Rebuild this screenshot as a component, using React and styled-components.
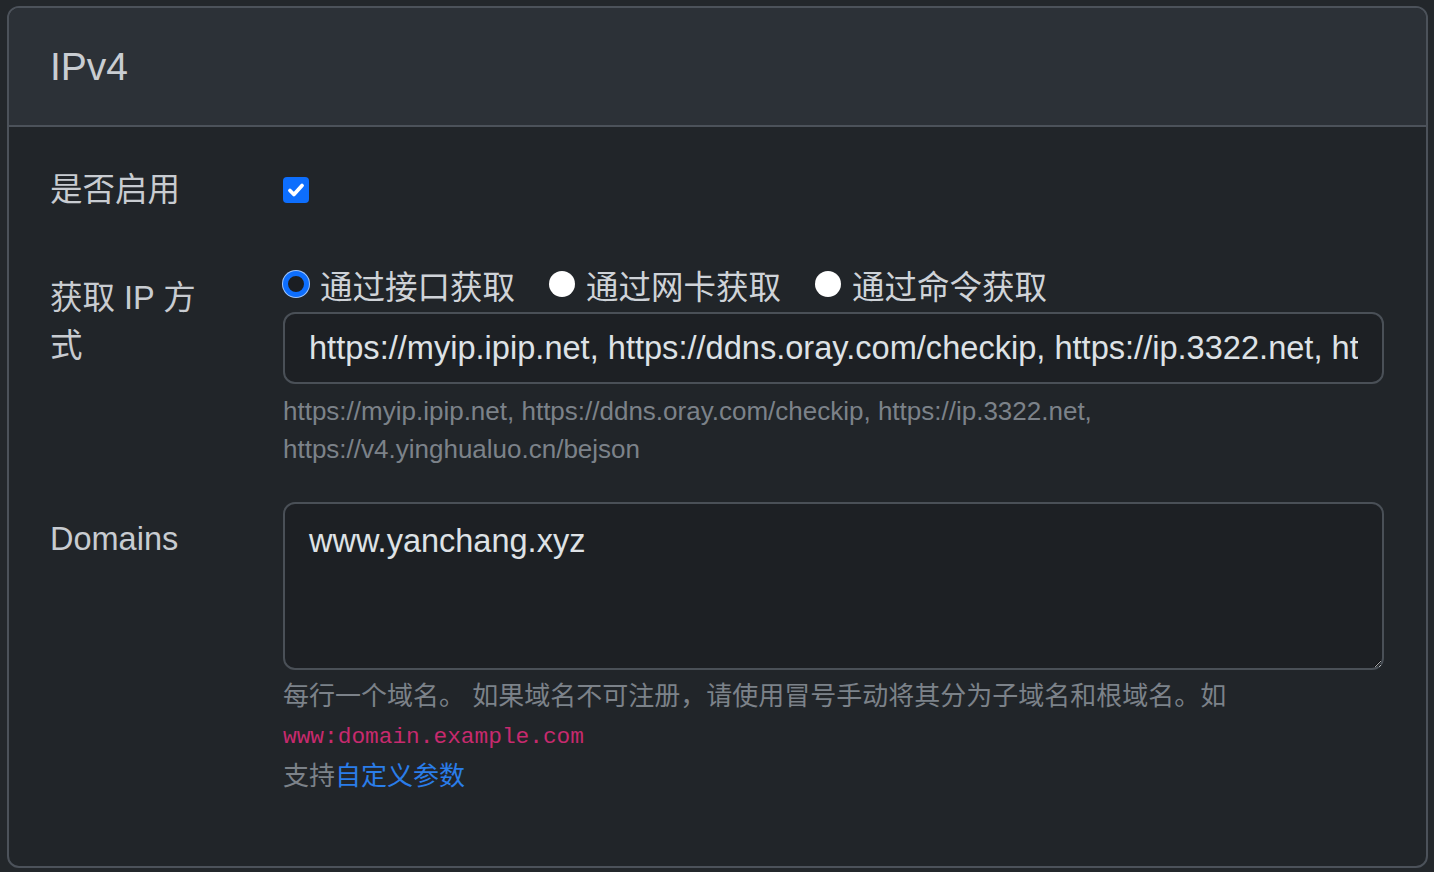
import React from "react";
import styled, { createGlobalStyle } from "styled-components";

const GlobalStyle = createGlobalStyle`
  html, body {
    margin: 0;
    padding: 0;
    background: #23272b;
  }
  body {
    font-family: "Liberation Sans", "Noto Sans CJK SC", sans-serif;
  }
`;

const urls =
  "https://myip.ipip.net, https://ddns.oray.com/checkip, https://ip.3322.net, https://v4.yinghualuo.cn/bejson";

export default function App() {
  return (
    <>
      <GlobalStyle />
      <Page>
        <Card>
          <CardHeader>IPv4</CardHeader>
          <CardBody>
            <Row>
              <Label>是否启用</Label>
              <Control>
                <CheckLine>
                  <Checkbox>
                    <svg width="22" height="22" viewBox="0 0 20 20">
                      <path
                        d="M4.5 10.5l3.6 3.6L15.5 6"
                        fill="none"
                        stroke="#fff"
                        strokeWidth="3.4"
                        strokeLinecap="round"
                        strokeLinejoin="round"
                      />
                    </svg>
                  </Checkbox>
                </CheckLine>
              </Control>
            </Row>
            <Row>
              <Label>获取 IP 方式</Label>
              <Control>
                <RadioGroup>
                  <RadioItem>
                    <Radio $checked />
                    通过接口获取
                  </RadioItem>
                  <RadioItem>
                    <Radio />
                    通过网卡获取
                  </RadioItem>
                  <RadioItem>
                    <Radio />
                    通过命令获取
                  </RadioItem>
                </RadioGroup>
                <Input type="text" defaultValue={urls} readOnly />
                <HelpText $top={8}>{urls}</HelpText>
              </Control>
            </Row>
            <Row>
              <Label>Domains</Label>
              <Control>
                <TextArea defaultValue="www.yanchang.xyz" />
                <HelpText $top={7}>
                  每行一个域名。 如果域名不可注册，请使用冒号手动将其分为子域名和根域名。如
                  <br />
                  <Code>www:domain.example.com</Code>
                  <br />
                  支持<Link href="#">自定义参数</Link>
                </HelpText>
              </Control>
            </Row>
          </CardBody>
        </Card>
      </Page>
    </>
  );
}

const Page = styled.div`
  padding: 6px 6px 4px 7px;
  box-sizing: border-box;
  width: 1434px;
  height: 872px;
`;

const Card = styled.div`
  box-sizing: border-box;
  width: 1421px;
  height: 862px;
  border: 2px solid #4c525a;
  border-radius: 12px;
  background: #212529;
  overflow: hidden;
`;

const CardHeader = styled.div`
  height: 119px;
  box-sizing: border-box;
  display: flex;
  align-items: center;
  padding: 0 41px;
  background: #2c3137;
  border-bottom: 2px solid #4c525a;
  color: #c9cdd2;
  font-size: 39px;
`;

const CardBody = styled.div`
  padding: 26px 42px 0 41px;
  display: flex;
  flex-direction: column;
  gap: 34px;
`;

const Row = styled.div`
  display: grid;
  grid-template-columns: 160px 1fr;
  column-gap: 73px;
  align-items: start;
`;

const Label = styled.div`
  padding: 13px 0;
  font-size: 32.5px;
  line-height: 48px;
  color: #c8ccd1;
`;

const Control = styled.div`
  display: flex;
  flex-direction: column;
  min-width: 0;
`;

const CheckLine = styled.div`
  padding: 13px 0;
  height: 48px;
  display: flex;
  align-items: center;
`;

const Checkbox = styled.span`
  width: 26px;
  height: 26px;
  box-sizing: border-box;
  border-radius: 4px;
  background: #0d6efd;
  display: flex;
  align-items: center;
  justify-content: center;
`;

const RadioGroup = styled.div`
  display: flex;
  align-items: center;
  height: 46px;
  margin-bottom: 2px;
  gap: 34px;
`;

const RadioItem = styled.label`
  display: flex;
  align-items: center;
  gap: 11px;
  font-size: 32.5px;
  color: #cfd3d8;
  white-space: nowrap;
`;

const Radio = styled.span`
  width: 26px;
  height: 26px;
  box-sizing: border-box;
  border-radius: 50%;
  background: ${(p) => (p.$checked ? "#1b1e22" : "#ffffff")};
  border: ${(p) => (p.$checked ? "5px solid #0d6efd" : "none")};
  box-shadow: ${(p) => (p.$checked ? "0 0 0 1px #9ec5fe" : "none")};
`;

const Input = styled.input`
  margin-top: 3px;
  height: 72px;
  box-sizing: border-box;
  width: 100%;
  padding: 0 24px;
  border: 2px solid #4a5057;
  border-radius: 12px;
  background: #1d2024;
  color: #dee2e6;
  font-family: "Liberation Sans", "Noto Sans CJK SC", sans-serif;
  font-size: 32.6px;
  outline: none;
`;

const TextArea = styled.textarea`
  height: 168px;
  box-sizing: border-box;
  width: 100%;
  padding: 13px 24px;
  border: 2px solid #4a5057;
  border-radius: 12px;
  background: #1d2024;
  color: #dee2e6;
  font-family: "Liberation Sans", "Noto Sans CJK SC", sans-serif;
  font-size: 32.5px;
  line-height: 48px;
  outline: none;
  resize: vertical;
`;

const HelpText = styled.div`
  margin-top: ${(p) => p.$top}px;
  font-size: 26px;
  line-height: 38px;
  color: #7c8289;
`;

const Code = styled.code`
  font-family: "Liberation Mono", monospace;
  font-size: 22.8px;
  color: #c72a6e;
  line-height: 40px;
`;

const Link = styled.a`
  color: #2a7de9;
  text-decoration: none;
`;
